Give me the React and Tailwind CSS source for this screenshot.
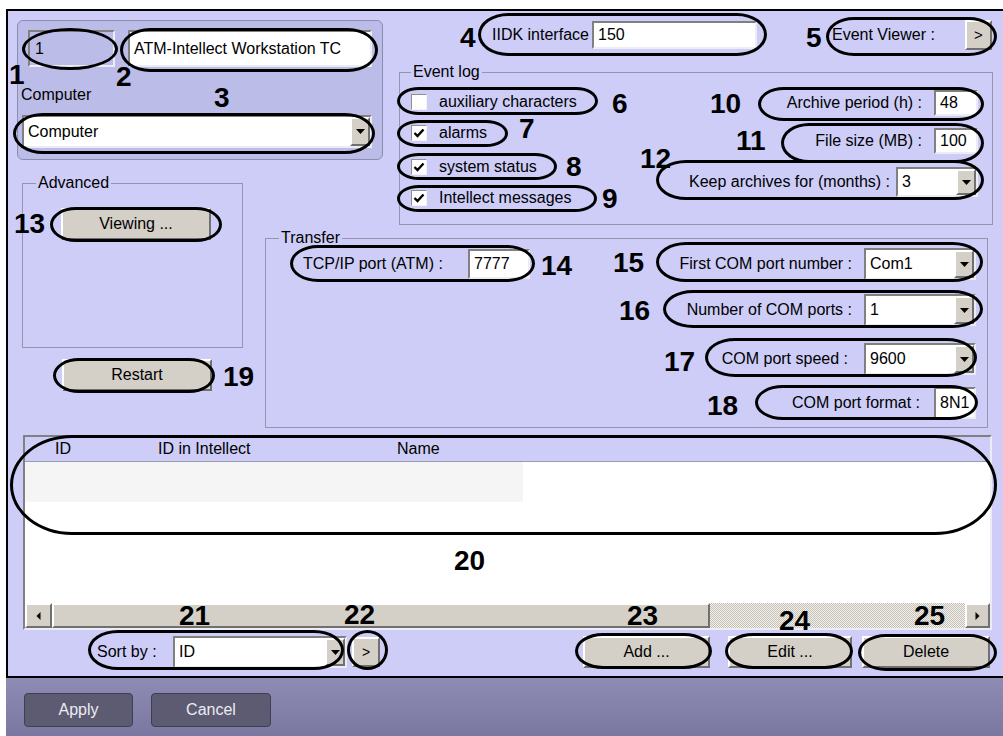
import React from 'react';

const sunken =
  'border-2 border-t-[#808080] border-l-[#808080] border-r-[#ececf4] border-b-[#ececf4]';
const raised =
  'border-2 border-t-[#ffffff] border-l-[#ffffff] border-r-[#707070] border-b-[#707070] bg-[#d4d0c8]';

function Field({ className = '', children }) {
  return (
    <div className={`flex items-center pl-[4px] bg-white ${sunken} ${className}`}>
      {children}
    </div>
  );
}

function Combo({ className = '', value }) {
  return (
    <div className={`flex items-stretch bg-white ${sunken} ${className}`}>
      <span className="flex-1 flex items-center pl-[4px]">{value}</span>
      <span className={`w-[20px] flex items-center justify-center ${raised}`}>
        <svg width="9" height="5" viewBox="0 0 9 5">
          <polygon points="0,0 9,0 4.5,5" fill="#000" />
        </svg>
      </span>
    </div>
  );
}

function Btn({ className = '', children }) {
  return (
    <div className={`flex items-center justify-center ${raised} ${className}`}>{children}</div>
  );
}

function Check({ checked }) {
  return (
    <span className="w-[16px] h-[16px] bg-white border border-t-[#909090] border-l-[#909090] border-r-[#f4f4f4] border-b-[#f4f4f4] flex items-center justify-center">
      {checked && (
        <svg width="14" height="14" viewBox="0 0 14 14">
          <path d="M2.5 7 L5.5 10 L11.5 3.5" stroke="#000" strokeWidth="2.4" fill="none" />
        </svg>
      )}
    </span>
  );
}

function Frame({ legend, className = '', legendClass = '', children }) {
  return (
    <fieldset className={`border border-[#9494b0] flex flex-col ${className}`}>
      <legend className={`px-[2px] leading-[18px] ${legendClass}`}>{legend}</legend>
      {children}
    </fieldset>
  );
}

// annotation rings drawn over the dialog
const ovals = [
  'left-[22px] top-[28px] w-[96px] h-[42px] rounded-[50%]',
  'left-[120px] top-[28px] w-[258px] h-[44px] rounded-[30px/50%]',
  'left-[13px] top-[113px] w-[362px] h-[41px] rounded-[30px/50%]',
  'left-[478px] top-[13px] w-[289px] h-[43px] rounded-[30px/50%]',
  'left-[826px] top-[17px] w-[171px] h-[39px] rounded-[28px/50%]',
  'left-[397px] top-[87px] w-[201px] h-[28px] rounded-[22px/50%]',
  'left-[397px] top-[120px] w-[111px] h-[27px] rounded-[22px/50%]',
  'left-[397px] top-[153px] w-[160px] h-[27px] rounded-[22px/50%]',
  'left-[397px] top-[185px] w-[200px] h-[27px] rounded-[22px/50%]',
  'left-[758px] top-[87px] w-[226px] h-[34px] rounded-[26px/50%]',
  'left-[781px] top-[123px] w-[203px] h-[40px] rounded-[28px/50%]',
  'left-[656px] top-[160px] w-[328px] h-[40px] rounded-[30px/50%]',
  'left-[50px] top-[207px] w-[172px] h-[35px] rounded-[26px/50%]',
  'left-[290px] top-[245px] w-[245px] h-[37px] rounded-[28px/50%]',
  'left-[656px] top-[242px] w-[327px] h-[40px] rounded-[30px/50%]',
  'left-[663px] top-[290px] w-[320px] h-[38px] rounded-[30px/50%]',
  'left-[705px] top-[338px] w-[272px] h-[39px] rounded-[30px/50%]',
  'left-[755px] top-[385px] w-[223px] h-[35px] rounded-[28px/50%]',
  'left-[53px] top-[358px] w-[162px] h-[35px] rounded-[26px/50%]',
  'left-[10px] top-[435px] w-[987px] h-[100px] rounded-[62px/50%]',
  'left-[88px] top-[630px] w-[256px] h-[40px] rounded-[30px/50%]',
  'left-[347px] top-[630px] w-[41px] h-[40px] rounded-[50%]',
  'left-[575px] top-[633px] w-[137px] h-[36px] rounded-[28px/50%]',
  'left-[725px] top-[633px] w-[128px] h-[36px] rounded-[28px/50%]',
  'left-[858px] top-[634px] w-[139px] h-[37px] rounded-[28px/50%]',
];

const marks = [
  ['1', 'left-[9px] top-[61px]'],
  ['2', 'left-[116px] top-[63px]'],
  ['3', 'left-[214px] top-[84px]'],
  ['4', 'left-[460px] top-[24px]'],
  ['5', 'left-[806px] top-[24px]'],
  ['6', 'left-[612px] top-[90px]'],
  ['7', 'left-[519px] top-[115px]'],
  ['8', 'left-[566px] top-[153px]'],
  ['9', 'left-[602px] top-[185px]'],
  ['10', 'left-[710px] top-[90px]'],
  ['11', 'left-[736px] top-[127px]'],
  ['12', 'left-[640px] top-[145px]'],
  ['13', 'left-[14px] top-[210px]'],
  ['14', 'left-[541px] top-[252px]'],
  ['15', 'left-[613px] top-[249px]'],
  ['16', 'left-[619px] top-[297px]'],
  ['17', 'left-[664px] top-[348px]'],
  ['18', 'left-[707px] top-[392px]'],
  ['19', 'left-[223px] top-[363px]'],
  ['20', 'left-[454px] top-[547px]'],
  ['21', 'left-[179px] top-[602px]'],
  ['22', 'left-[344px] top-[601px]'],
  ['23', 'left-[627px] top-[602px]'],
  ['24', 'left-[779px] top-[607px]'],
  ['25', 'left-[914px] top-[602px]'],
];

export default function App() {
  return (
    <div className="relative w-[1003px] h-[736px] overflow-hidden bg-white pt-[9px] pl-[6px] text-[16px] text-black font-['Liberation_Sans',Arial,sans-serif]">
      {/* main panel */}
      <div className="flex flex-col h-[669px] border-t-2 border-l-2 border-b-2 border-black bg-[#cdcdf7] pl-[9px] pt-[9px]">
        <div className="grid grid-cols-[248px_132px_1fr] grid-rows-[42px_98px_66px_204px]">
          {/* object group */}
          <div className="col-start-1 col-span-2 row-start-1 row-span-2 w-[366px] h-[140px] rounded-[6px] border border-[#8c8cae] bg-[#bcbce9] flex flex-col">
            <div className="flex mt-[9px] ml-[10px]">
              <div className={`w-[87px] h-[37px] flex items-center pl-[5px] ${sunken}`}>1</div>
              <Field className="ml-[13px] w-[244px] h-[37px] whitespace-nowrap overflow-hidden">
                ATM-Intellect Workstation TC
              </Field>
            </div>
            <div className="mt-[19px] ml-[3px] leading-[18px]">Computer</div>
            <Combo className="mt-[11px] ml-[4px] w-[350px] h-[33px]" value="Computer" />
          </div>

          {/* IIDK + event viewer */}
          <div className="col-start-3 row-start-1 flex items-center h-[30px] whitespace-nowrap">
            <span className="ml-[95px] w-[100px]">IIDK interface :</span>
            <Field className="w-[165px] h-[28px]">150</Field>
            <span className="ml-[75px] w-[133px]">Event Viewer :</span>
            <Btn className="w-[27px] h-[30px] text-[15px]">&gt;</Btn>
          </div>

          {/* event log */}
          <Frame
            legend="Event log"
            legendClass="ml-[11px]"
            className="col-start-3 row-start-2 row-span-2 mt-[1px] ml-[2px] w-[594px] h-[162px]"
          >
            <div className="flex whitespace-nowrap">
              <div className="flex flex-col pl-[11px] pt-[9px]">
                <div className="flex items-center h-[24px]">
                  <Check />
                  <span className="ml-[12px]">auxiliary characters</span>
                </div>
                <div className="flex items-center h-[24px] mt-[7px]">
                  <Check checked />
                  <span className="ml-[12px]">alarms</span>
                </div>
                <div className="flex items-center h-[24px] mt-[10px]">
                  <Check checked />
                  <span className="ml-[12px]">system status</span>
                </div>
                <div className="flex items-center h-[24px] mt-[7px]">
                  <Check checked />
                  <span className="ml-[12px]">Intellect messages</span>
                </div>
              </div>
              <div className="ml-auto pr-[14px] pt-[9px] flex flex-col items-end">
                <div className="flex items-center h-[26px]">
                  <span className="mr-[12px]">Archive period (h) :</span>
                  <Field className="w-[44px] h-[26px]">48</Field>
                </div>
                <div className="flex items-center h-[26px] mt-[12px]">
                  <span className="mr-[12px]">File size (MB) :</span>
                  <Field className="w-[44px] h-[26px]">100</Field>
                </div>
                <div className="flex items-center h-[30px] mt-[13px]">
                  <span className="mr-[6px]">Keep archives for (months) :</span>
                  <Combo className="w-[82px] h-[30px]" value="3" />
                </div>
              </div>
            </div>
          </Frame>

          {/* advanced + restart */}
          <div className="col-start-1 row-start-3 row-span-2 flex flex-col">
            <Frame
              legend="Advanced"
              legendClass="ml-[13px]"
              className="mt-[14px] ml-[5px] w-[221px] h-[174px]"
            >
              <Btn className="mt-[16px] ml-[38px] w-[150px] h-[32px]">Viewing ...</Btn>
            </Frame>
            <Btn className="mt-[11px] ml-[45px] w-[150px] h-[32px]">Restart</Btn>
          </div>

          {/* transfer */}
          <Frame
            legend="Transfer"
            legendClass="ml-[13px]"
            className="col-start-2 col-span-2 row-start-4 mt-[3px] w-[723px] h-[199px]"
          >
            <div className="flex whitespace-nowrap">
              <div className="pl-[37px] pt-[2px]">
                <div className="flex items-center h-[30px]">
                  <span className="w-[165px]">TCP/IP port (ATM) :</span>
                  <Field className="w-[62px] h-[30px] pl-[2px]">7777</Field>
                </div>
              </div>
              <div className="ml-auto pr-[11px] pt-[1px] flex flex-col items-end">
                <div className="flex items-center h-[32px]">
                  <span className="mr-[12px]">First COM port number :</span>
                  <Combo className="w-[112px] h-[32px]" value="Com1" />
                </div>
                <div className="flex items-center h-[32px] mt-[14px]">
                  <span className="mr-[12px]">Number of COM ports :</span>
                  <Combo className="w-[112px] h-[32px]" value="1" />
                </div>
                <div className="flex items-center h-[32px] mt-[17px]">
                  <span className="mr-[16px]">COM port speed :</span>
                  <Combo className="w-[112px] h-[32px]" value="9600" />
                </div>
                <div className="flex items-center h-[32px] mt-[12px]">
                  <span className="mr-[14px]">COM port format :</span>
                  <Field className="w-[42px] h-[32px] pl-[2px]">8N1</Field>
                </div>
              </div>
            </div>
          </Frame>
        </div>

        {/* list */}
        <div className={`mt-[5px] ml-[6px] w-[969px] h-[195px] flex flex-col ${sunken}`}>
          <div className="h-[25px] flex items-center border-b border-[#9a9ab0] bg-[#cdcdf7] whitespace-nowrap">
            <span className="pl-[30px] w-[133px]">ID</span>
            <span className="w-[239px]">ID in Intellect</span>
            <span>Name</span>
          </div>
          <div className="flex-1 bg-white">
            <div className="h-[40px] w-[498px] bg-[#f5f5f5]" />
          </div>
          <div className="h-[25px] flex bg-[#d4d0c8]">
            <Btn className="w-[27px]">
              <svg width="5" height="8" viewBox="0 0 5 8">
                <polygon points="4.5,0 4.5,8 0.5,4" fill="#000" />
              </svg>
            </Btn>
            <Btn className="w-[658px]" />
            <div className="flex-1 bg-[repeating-conic-gradient(#c4c0b8_0%_25%,#f2f1ec_0%_50%)] bg-[length:2px_2px]" />
            <Btn className="w-[25px]">
              <svg width="5" height="8" viewBox="0 0 5 8">
                <polygon points="0.5,0 0.5,8 4.5,4" fill="#000" />
              </svg>
            </Btn>
          </div>
        </div>

        {/* bottom controls */}
        <div className="mt-[6px] flex items-center h-[32px] whitespace-nowrap">
          <span className="ml-[80px] w-[76px]">Sort by :</span>
          <Combo className="w-[174px] h-[32px]" value="ID" />
          <Btn className="ml-[5px] w-[28px] h-[30px] text-[14px]">&gt;</Btn>
          <Btn className="ml-[203px] w-[127px] h-[32px]">Add ...</Btn>
          <Btn className="ml-[18px] w-[124px] h-[32px]">Edit ...</Btn>
          <Btn className="ml-[10px] w-[128px] h-[32px]">Delete</Btn>
        </div>
      </div>

      {/* footer */}
      <div className="h-[58px] bg-linear-to-b from-[#8e8cb4] to-[#7a78a0] flex items-start pt-[15px]">
        <div className="ml-[18px] w-[109px] h-[34px] rounded-[4px] border border-[#3f3e52] bg-[#5c5b71] text-[#ececf4] flex items-center justify-center">
          Apply
        </div>
        <div className="ml-[18px] w-[120px] h-[34px] rounded-[4px] border border-[#3f3e52] bg-[#5c5b71] text-[#ececf4] flex items-center justify-center">
          Cancel
        </div>
      </div>

      {ovals.map((c, i) => (
        <div key={i} className={`absolute border-[3px] border-black ${c}`} />
      ))}
      {marks.map(([n, c]) => (
        <div key={n} className={`absolute text-[28px] font-bold leading-none ${c}`}>
          {n}
        </div>
      ))}
    </div>
  );
}
